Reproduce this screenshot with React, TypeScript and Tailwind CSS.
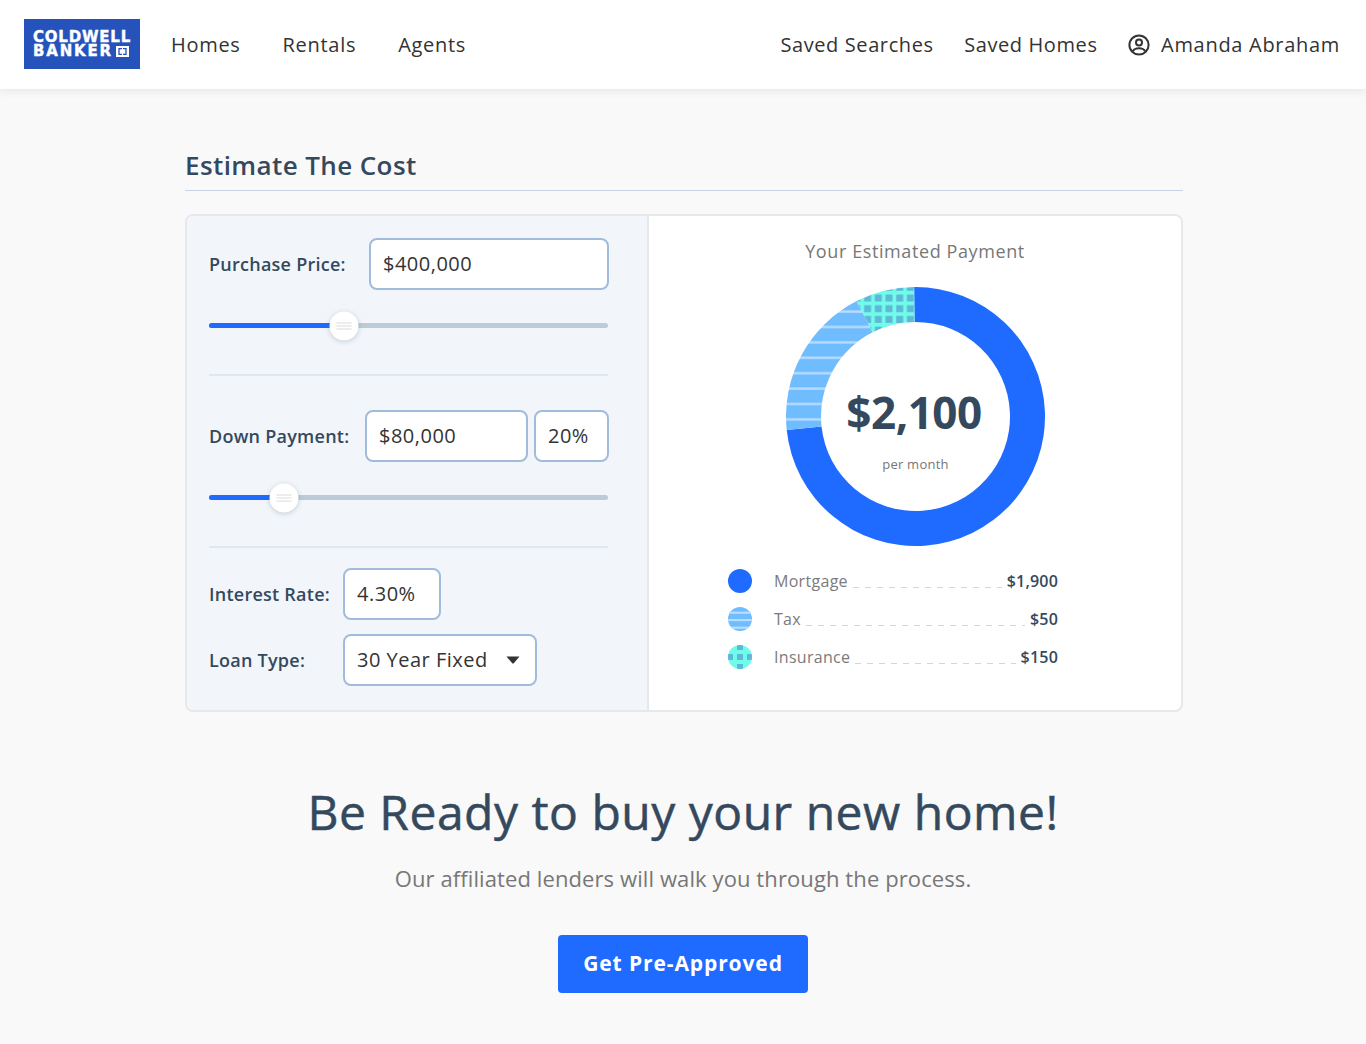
const font = "font-['Open_Sans',sans-serif]";

function arc(start: number, end: number) {
  const c = 129.5;
  const R = 129.5;
  const r = 94.5;
  const pt = (rad: number, deg: number) => {
    const a = (deg * Math.PI) / 180;
    return `${c + rad * Math.sin(a)} ${c - rad * Math.cos(a)}`;
  };
  const large = end - start > 180 ? 1 : 0;
  return `M${pt(R, start)} A${R} ${R} 0 ${large} 1 ${pt(R, end)} L${pt(r, end)} A${r} ${r} 0 ${large} 0 ${pt(r, start)} Z`;
}

function Donut() {
  return (
    <svg width="259" height="259" viewBox="0 0 259 259">
      <defs>
        <pattern id="tax" width="15.4" height="15.4" patternUnits="userSpaceOnUse">
          <rect width="15.4" height="15.4" fill="#6fbcff" />
          <rect y="8" width="15.4" height="2.4" fill="#b9dcff" />
        </pattern>
        <pattern id="ins" width="10.7" height="10.7" patternUnits="userSpaceOnUse">
          <rect width="10.7" height="10.7" fill="#6ffde9" />
          <rect x="3.2" y="7.5" width="7" height="7" fill="#5fb8d8" />
          <rect x="3.2" y="-3.2" width="7" height="7" fill="#5fb8d8" />
        </pattern>
      </defs>
      <path d={arc(-0.6, 264)} fill="#1f6bff" />
      <path d={arc(264, 333)} fill="url(#tax)" />
      <path d={arc(333, 359.4)} fill="url(#ins)" />
    </svg>
  );
}

function LegendDot({ kind }: { kind: "mortgage" | "tax" | "insurance" }) {
  return (
    <svg width="24" height="24" viewBox="0 0 24 24" className="shrink-0">
      <defs>
        <clipPath id={`dot-${kind}`}>
          <circle cx="12" cy="12" r="12" />
        </clipPath>
      </defs>
      <g clipPath={`url(#dot-${kind})`}>
        {kind === "mortgage" && <rect width="24" height="24" fill="#1f6bff" />}
        {kind === "tax" && (
          <>
            <rect width="24" height="24" fill="#6fbcff" />
            <rect y="4.6" width="24" height="2.2" fill="#b9dcff" />
            <rect y="12" width="24" height="2.2" fill="#b9dcff" />
            <rect y="19.6" width="24" height="2.2" fill="#b9dcff" />
          </>
        )}
        {kind === "insurance" && (
          <>
            <rect width="24" height="24" fill="#6ffde9" />
            <rect x="9" y="0" width="6" height="5" fill="#5fb8d8" />
            <rect x="0" y="9" width="5" height="6" fill="#5fb8d8" />
            <rect x="9" y="9" width="6" height="6" fill="#5fb8d8" />
            <rect x="19" y="9" width="5" height="6" fill="#5fb8d8" />
            <rect x="9" y="19" width="6" height="5" fill="#5fb8d8" />
          </>
        )}
      </g>
    </svg>
  );
}

function LegendRow({ kind, label, amount }: { kind: "mortgage" | "tax" | "insurance"; label: string; amount: string }) {
  return (
    <div className="flex items-center h-[38px]">
      <LegendDot kind={kind} />
      <span className="ml-[22px] text-[16px] tracking-[0.3px] text-[#7b7b7b]">{label}</span>
      <span className="mx-[5px] mt-[12px] h-px flex-1 bg-[repeating-linear-gradient(90deg,#d6d6d6_0_6px,transparent_6px_12px)]" />
      <span className="text-[16px] font-semibold tracking-[0.2px] text-[#34495e]">{amount}</span>
    </div>
  );
}

function Slider({ percent }: { percent: number }) {
  return (
    <div className="relative h-[5px] rounded-full bg-[#bdcbd6]">
      <div className="h-full rounded-full bg-[#1f6bff]" style={{ width: `${percent}%` }} />
      <div
        className="absolute top-1/2 flex h-[29px] w-[29px] -translate-x-1/2 -translate-y-1/2 flex-col items-center justify-center gap-[2px] rounded-full bg-white shadow-[0_1px_5px_rgba(80,100,130,0.3)]"
        style={{ left: `${percent}%` }}
      >
        <span className="h-px w-[15px] bg-[#dcdcdc]" />
        <span className="h-px w-[15px] bg-[#dcdcdc]" />
        <span className="h-px w-[15px] bg-[#dcdcdc]" />
      </div>
    </div>
  );
}

function Field({ className, children }: { className: string; children: React.ReactNode }) {
  return (
    <div className={`flex h-[52px] shrink-0 items-center rounded-[8px] border-2 border-[#a2bbdc] bg-white pl-[12px] text-[20px] tracking-[0.5px] text-[#333] ${className}`}>
      {children}
    </div>
  );
}

function Label({ className, children }: { className: string; children: React.ReactNode }) {
  return <div className={`shrink-0 text-[18px] font-semibold tracking-[0.25px] text-[#34495e] ${className}`}>{children}</div>;
}

export default function App() {
  return (
    <div className={`min-h-[1044px] bg-[#f9f9f9] ${font}`}>
      {/* Header */}
      <header className="flex h-[89px] items-center bg-white pl-[24px] pr-[26px] shadow-[0_2px_8px_rgba(60,70,90,0.1)]">
        <div className="mt-[-1px] flex h-[50px] w-[116px] flex-col justify-center bg-[#2653bb] pl-[9px] font-['DejaVu_Sans',sans-serif] font-bold leading-[14px] text-white [-webkit-text-stroke:0.4px_white]">
          <span className="text-[15px] tracking-[0.8px]">COLDWELL</span>
          <span className="flex items-center text-[15px] tracking-[1.8px]">
            BANKER
            <span className="ml-[3px] flex h-[11px] w-[13px] items-center justify-center bg-white">
              <svg width="9" height="7" viewBox="0 0 9 7" fill="none" stroke="#2653bb" strokeWidth="1.3">
                <path d="M4 .7H1v5.6h3M5 .7h3v5.6H5" />
              </svg>
            </span>
          </span>
        </div>
        <nav className="ml-[31px] flex gap-[42px] text-[20px] tracking-[0.7px] text-[#333]">
          <span>Homes</span>
          <span>Rentals</span>
          <span>Agents</span>
        </nav>
        <div className="ml-auto flex items-center text-[20px] tracking-[0.6px] text-[#333]">
          <span>Saved Searches</span>
          <span className="ml-[30.5px]">Saved Homes</span>
          <svg className="ml-[30.5px]" width="22" height="22" viewBox="0 0 22 22" fill="none" stroke="#333" strokeWidth="2">
            <circle cx="11" cy="11" r="9.6" />
            <circle cx="11" cy="8.6" r="3" />
            <path d="M4.8 17.2c1.2-2.3 3.6-3 6.2-3s5 .7 6.2 3" />
          </svg>
          <span className="ml-[11px] tracking-[0.7px]">Amanda Abraham</span>
        </div>
      </header>

      <main>
        {/* Calculator */}
        <section className="ml-[185px] w-[998px] pt-[57px]">
          <h2 className="border-b border-[#c5d3e2] pb-[5px] text-[26px] leading-[39px] font-semibold tracking-[0.4px] text-[#34495e]">
            Estimate The Cost
          </h2>
          <div className="mt-[23px] flex h-[498px] overflow-hidden rounded-[8px] border-2 border-[#e5e9ec] bg-white">
            <div className="w-[462px] shrink-0 border-r-2 border-[#e5e9ec] bg-[#f2f6fa] pl-[22px] pr-[39px] pt-[22px]">
              <div className="flex items-center justify-between">
                <Label className="">Purchase Price:</Label>
                <Field className="mr-[-1px] w-[240px]">$400,000</Field>
              </div>
              <div className="mt-[33px]">
                <Slider percent={33.8} />
              </div>
              <div className="mt-[46px] h-[2px] bg-[#e0e7ee]" />
              <div className="mt-[34px] flex items-center">
                <Label className="w-[156px]">Down Payment:</Label>
                <Field className="w-[163px]">$80,000</Field>
                <Field className="ml-[6px] w-[75px]">20%</Field>
              </div>
              <div className="mt-[33px]">
                <Slider percent={18.8} />
              </div>
              <div className="mt-[46px] h-[2px] bg-[#e0e7ee]" />
              <div className="mt-[20px] flex items-center">
                <Label className="w-[134px]">Interest Rate:</Label>
                <Field className="w-[98px]">4.30%</Field>
              </div>
              <div className="mt-[14px] flex items-center">
                <Label className="w-[134px]">Loan Type:</Label>
                <Field className="w-[194px] justify-between pr-[15px]">
                  30 Year Fixed
                  <svg width="14" height="8" viewBox="0 0 14 8">
                    <path d="M0.5 0.5h13L8 7a1.4 1.4 0 0 1-2 0z" fill="#333" />
                  </svg>
                </Field>
              </div>
            </div>

            <div className="flex flex-1 flex-col items-center pt-[23px]">
              <div className="text-[18px] leading-[24px] font-medium tracking-[0.6px] text-[#777]">Your Estimated Payment</div>
              <div className="relative mt-[24px] h-[259px] w-[259px]">
                <Donut />
                <div className="absolute inset-0 flex flex-col items-center">
                  <div className="mr-[2px] mt-[95px] text-[44px] leading-[60px] font-bold tracking-[-0.5px] text-[#34495e]">$2,100</div>
                  <div className="ml-[1px] mt-[13px] text-[13px] leading-[18px] tracking-[0.25px] text-[#777]">per month</div>
                </div>
              </div>
              <div className="mr-[44px] mt-[16px] w-[330px]">
                <LegendRow kind="mortgage" label="Mortgage" amount="$1,900" />
                <LegendRow kind="tax" label="Tax" amount="$50" />
                <LegendRow kind="insurance" label="Insurance" amount="$150" />
              </div>
            </div>
          </div>
        </section>

        {/* Call to action */}
        <section className="flex flex-col items-center pt-[67px]">
          <h1 className="text-[48px] leading-[66px] font-medium tracking-[0.5px] text-[#34495e] [-webkit-text-stroke:0.5px_#34495e]">Be Ready to buy your new home!</h1>
          <p className="mt-[17px] text-[22px] leading-[32px] tracking-[0.1px] text-[#777]">
            Our affiliated lenders will walk you through the process.
          </p>
          <button className="mt-[41px] h-[58px] w-[250px] rounded-[4px] bg-[#1f6bff] text-[21px] font-bold tracking-[0.9px] text-white">
            Get Pre-Approved
          </button>
        </section>
      </main>
    </div>
  );
}
